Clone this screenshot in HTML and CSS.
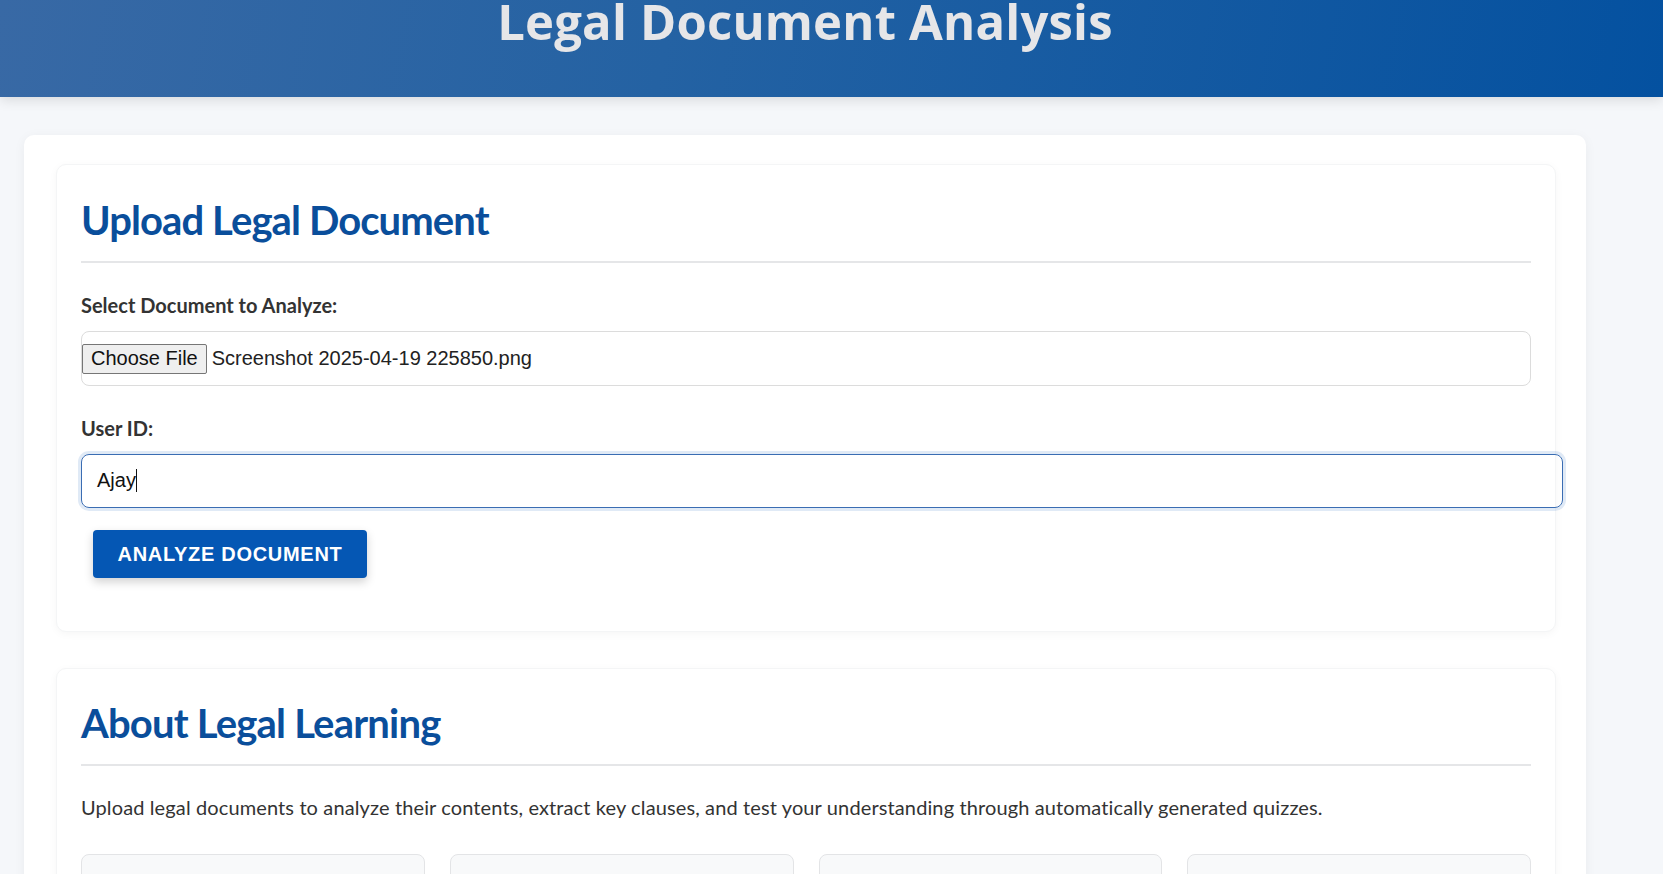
FILE: index.html
```html
<!DOCTYPE html>
<html lang="en">
<head>
<meta charset="utf-8">
<title>Legal Document Analysis</title>
<link rel="stylesheet" href="styles.css">
</head>
<body>
<header class="site-header">
  <div class="header-inner">
    <h1 class="site-title">Legal Document Analysis</h1>
  </div>
</header>
<main class="container">
  <section class="panel panel-upload">
    <h2 class="panel-title">Upload Legal Document</h2>
    <form class="upload-form">
      <label class="field-label">Select Document to Analyze:</label>
      <div class="file-box">
        <span class="file-button">Choose File</span>
        <span class="file-name">Screenshot 2025-04-19 225850.png</span>
      </div>
      <label class="field-label label-user">User ID:</label>
      <div class="text-input is-focused"><span class="input-value">Ajay</span><span class="caret"></span></div>
      <button type="button" class="analyze-btn">Analyze Document</button>
    </form>
  </section>
  <section class="panel panel-about">
    <h2 class="panel-title">About Legal Learning</h2>
    <p class="about-text">Upload legal documents to analyze their contents, extract key clauses, and test your understanding through automatically generated quizzes.</p>
    <div class="feature-grid">
      <div class="feature-card"></div>
      <div class="feature-card"></div>
      <div class="feature-card"></div>
      <div class="feature-card"></div>
    </div>
  </section>
</main>
</body>
</html>
```
FILE: styles.css
```css
* { box-sizing: content-box; }
html, body { margin: 0; padding: 0; }
body {
  background: #f5f7fa;
  font-family: "Lato", "Open Sans", sans-serif;
  color: #333;
  overflow: hidden;
}
.site-header {
  height: 97px;
  background: linear-gradient(100deg, #3869a5 0%, #2462a3 40%, #0451a0 100%);
  box-shadow: 0 3px 12px rgba(0, 0, 0, 0.12);
  position: relative;
  z-index: 1;
}
.header-inner {
  width: 1562px;
  margin-left: 24px;
  text-align: center;
}
.site-title {
  margin: 0;
  padding-top: 0;
  font-family: "Open Sans", "Lato", sans-serif;
  font-size: 49px;
  line-height: 42px;
  font-weight: 700;
  color: #e6e6e8;
  letter-spacing: 0.2px;
}
.container {
  width: 1500px;
  margin: 38px 0 0 24px;
  padding: 29px 30px 40px 32px;
  background: #fff;
  border-radius: 10px;
  box-shadow: 0 2px 12px rgba(0, 0, 0, 0.05);
}
.panel {
  background: #fff;
  border-radius: 10px;
  border: 1px solid #f4f5f6;
  box-shadow: 0 2px 8px rgba(0, 0, 0, 0.04);
  padding: 31px 24px 0 24px;
}
.panel-upload { padding-bottom: 53px; }
.panel-about { margin-top: 36px; padding-top: 30px; padding-bottom: 40px; }
.panel-title {
  margin: 0;
  font-size: 40px;
  line-height: 48px;
  font-weight: 700;
  color: #0a4e9b;
  letter-spacing: -0.9px;
  padding-bottom: 17px;
  border-bottom: 2px solid #e5e6e8;
}
.panel-about .panel-title { letter-spacing: -0.8px; }
.upload-form { display: flex; flex-direction: column; align-items: flex-start; }
.field-label {
  display: block;
  margin-top: 30px;
  margin-bottom: 14px;
  font-size: 20px;
  line-height: 24px;
  font-weight: 700;
  color: #333;
}
.file-box {
  align-self: stretch;
  display: flex;
  align-items: center;
  height: 53px;
  border: 1px solid #dcdcdc;
  border-radius: 8px;
  font-family: "Liberation Sans", Arial, sans-serif;
  font-size: 20px;
  color: #222;
}
.file-button {
  margin-left: 0;
  padding: 2px 8px 3px;
  height: 23px;
  line-height: 23px;
  background: #efefef;
  border: 1px solid #767676;
  border-radius: 2px;
  color: #111;
}
.file-name { margin-left: 5px; }
.text-input {
  align-self: stretch;
  margin-right: -32px;
  height: 23px;
  padding: 14px 15px 15px;
  border: 1px solid #3a6db3;
  border-radius: 8px;
  box-shadow: 0 0 0 3px rgba(0, 86, 179, 0.12);
  font-family: "Liberation Sans", Arial, sans-serif;
  font-size: 20px;
  line-height: 23px;
  color: #111;
  display: flex;
  align-items: center;
}
.caret {
  display: inline-block;
  width: 1px;
  height: 23px;
  background: #111;
  margin-left: 0;
}
.analyze-btn {
  margin: 22px 0 0 12px;
  width: 274px;
  height: 48px;
  padding: 0;
  border: none;
  border-radius: 4px;
  background: #0557b4;
  color: #fff;
  font-family: "Liberation Sans", Arial, sans-serif;
  font-size: 20px;
  font-weight: 700;
  letter-spacing: 0.7px;
  text-transform: uppercase;
  box-shadow: 0 4px 10px rgba(0, 0, 0, 0.18);
  cursor: pointer;
}
.about-text {
  margin: 25px 0 31px;
  font-size: 20px;
  line-height: 32px;
  letter-spacing: 0.12px;
  color: #333;
}
.feature-grid {
  display: grid;
  grid-template-columns: repeat(4, 1fr);
  gap: 25px;
}
.feature-card {
  height: 180px;
  background: #f8f9fa;
  border: 1px solid #e3e4e6;
  border-radius: 8px;
}
```
